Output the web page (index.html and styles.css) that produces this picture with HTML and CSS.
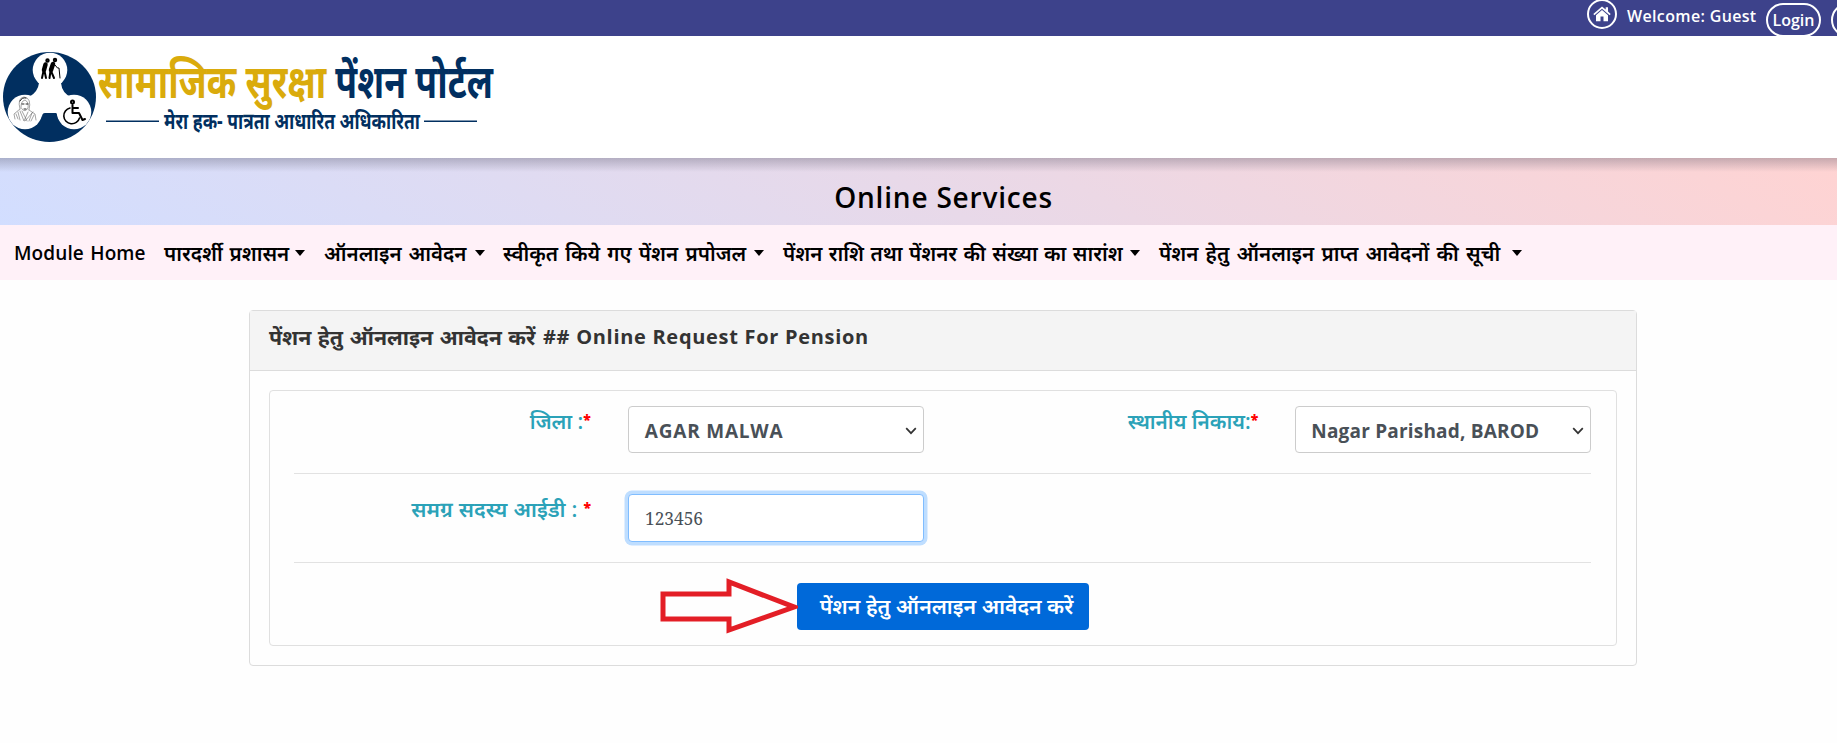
FILE: index.html
```html
<!DOCTYPE html>
<html lang="hi">
<head>
<meta charset="utf-8">
<title>Online Services</title>
<link rel="stylesheet" href="styles.css">
</head>
<body>
<header class="topbar">
  <a class="home"><svg width="18" height="16" viewBox="0 0 18 16"><path d="M9 0.5 0.3 8l1.1 1.2L9 2.8l7.6 6.4L17.7 8 15 5.6V1.2h-2.3v2.4z"/><path d="M9 4 3 9.2V15.2h4.5v-4.6h3v4.6H15V9.2z"/></svg></a>
  <span class="welcome">Welcome: Guest</span>
  <a class="pill">Login</a>
  <a class="pill pill-next"></a>
</header>
<div class="brand">
  <svg width="700" height="122" viewBox="0 36 700 122">
    <ellipse cx="49.5" cy="97" rx="46.5" ry="45" fill="#012f60"/>
    <g fill="#fff">
      <circle cx="50" cy="70" r="17.3"/><circle cx="25" cy="112" r="17.3"/><circle cx="74" cy="112" r="17.3"/>
      <path d="M39 83Q38 92 29 97L42 117Q42 113 45 113H56Q57 113 58 117L71 97Q62 93 61 83z"/>
    </g>
    <g fill="none" stroke="#000" stroke-linecap="round" stroke-linejoin="round">
      <circle cx="47.500" cy="60.500" r="1.200" stroke-width="2"/><circle cx="55" cy="60" r="1.200" stroke-width="2"/>
      <path d="M45.500 64.500 44 70M53 64 51 70" stroke-width="4.500"/>
      <path d="M43.500 71 42 78M44.500 71 46 78M50.500 71 49.500 78M51 71 54 78" stroke-width="2"/>
      <path d="M55 65 57.500 68H59L60 78" stroke-width="1"/>
      <circle cx="72.500" cy="102" r="1.500" stroke-width="2"/>
      <path d="M72.500 105V113H79L82.500 120 85 119M72.500 108H78" stroke-width="2"/>
      <path d="M70 108A8 8 0 1 0 79.500 118" stroke-width="1.600"/>
      <g stroke="#666" stroke-width=".6">
        <path d="M20 109Q17 98 24 97Q32 98 29 110M21 107Q21 101 25 100Q29 102 28 108Q25 113 22 109z"/>
        <path d="M22 104H24M26 104H28M24 109H26M20 101Q22 97 26 98" stroke="#111" stroke-width=".9"/>
        <path d="M20 109 14 114 15 119M29 110 35 114 36 120M20 111 24 121 28 112M22 111 27 121M18 112 20 120M32 113 29 121M16 114 18 119M34 115 31 121M25 121 33 112"/>
      </g>
    </g>
    <text x="98" y="97.500" textLength="395" lengthAdjust="spacingAndGlyphs" fill="#012f60" class="logo-text"><tspan fill="#daab0c">सामाजिक सुरक्षा</tspan> पेंशन पोर्टल</text>
    <text x="164" y="129" textLength="256" lengthAdjust="spacingAndGlyphs" fill="#012f60" class="logo-sub">मेरा हक- पात्रता आधारित अधिकारिता</text>
    <path d="M106 121.300H159M424 121.300H477" stroke="#012f60" stroke-width="1.600"/>
  </svg>
</div>
<div class="banner"><h1>Online Services</h1></div>
<nav class="menu">
  <a class="m1">Module Home</a>
  <a class="m2 drop">पारदर्शी प्रशासन</a>
  <a class="m3 drop">ऑनलाइन आवेदन</a>
  <a class="m4 drop">स्वीकृत किये गए पेंशन प्रपोजल</a>
  <a class="m5 drop">पेंशन राशि तथा पेंशनर की संख्या का सारांश</a>
  <a class="m6 drop">पेंशन हेतु ऑनलाइन प्राप्त आवेदनों की सूची</a>
</nav>
<main class="card">
  <h2><span class="h2-hi">पेंशन हेतु ऑनलाइन आवेदन करें</span><span class="h2-en">## Online Request For Pension</span></h2>
  <form class="panel">
    <div class="row">
      <label>जिला :<i>*</i></label>
      <div class="field select"><span class="v1">AGAR MALWA</span><svg width="12" height="8" viewBox="0 0 12 8"><path d="M1.200 1.200 6 6.200 10.800 1.200"/></svg></div>
      <label>स्थानीय निकाय:<i>*</i></label>
      <div class="field select"><span class="v2">Nagar Parishad, BAROD</span><svg width="12" height="8" viewBox="0 0 12 8"><path d="M1.200 1.200 6 6.200 10.800 1.200"/></svg></div>
    </div>
    <div class="row row-id">
      <label class="label-id">समग्र सदस्य आईडी :<i class="gap">*</i></label>
      <div class="field focus">123456</div>
    </div>
    <div class="actions">
      <svg class="arrow" width="140" height="58" viewBox="0 0 140 58"><path d="M5 18H71V6L136 31 71 54V43H5z"/></svg>
      <button type="button">पेंशन हेतु ऑनलाइन आवेदन करें</button>
    </div>
  </form>
</main>
</body>
</html>
```
FILE: styles.css
```css
* { box-sizing: border-box; }
body { margin: 0; width: 1837px; height: 743px; overflow: hidden; background: #fefefe; color: #000; font-family: "Open Sans", "Noto Sans Devanagari", "Noto Sans", sans-serif; font-weight: 600; white-space: nowrap; }
.topbar { height: 36px; background: #3d428b; color: #fff; display: flex; align-items: flex-start; padding-left: 1587px; overflow: hidden; }
.home { width: 30px; height: 30px; margin-top: -1px; border: 2px solid #fff; border-radius: 50%; flex: none; display: flex; align-items: center; justify-content: center; }
.home svg { fill: #fff; }
.welcome { width: 149px; flex: none; padding-left: 10px; font-size: 16px; line-height: 32px; letter-spacing: .35px; }
.pill { width: 55px; height: 34px; flex: none; margin-top: 3px; border: 2px solid #fff; border-radius: 17px; text-align: center; font-size: 16px; line-height: 30px; }
.pill-next { margin-left: 10px; }
.brand { height: 122px; background: #fff; }
.brand svg { display: block; }
.logo-text { font-size: 46px; font-weight: 700; }
.logo-sub { font-size: 23px; font-weight: 700; }
.banner { height: 67px; padding-left: 50px; text-align: center; background: linear-gradient(rgba(70,70,90,.3), rgba(90,90,110,0) 14px), linear-gradient(30deg, #d2deff, #e8d9e9 50%, #ffd3d2); }
.banner h1 { margin: 0; font-size: 28px; line-height: 78px; font-weight: 600; letter-spacing: .8px; }
.menu { height: 55px; padding-left: 14px; background: #fff1f8; display: flex; line-height: 56px; font-size: 20.5px; word-spacing: 1.4px; }
.menu a { flex: none; display: flex; align-items: center; }
.drop::after { content: ""; margin-left: auto; border: 5.5px solid transparent; border-top: 6px solid #000; border-bottom: 0; }
.m1 { width: 131px; margin-right: 19px; font-size: 19px; letter-spacing: .1px; }
.m2 { width: 141px; margin-right: 19px; }
.m3 { width: 161px; margin-right: 18px; }
.m4 { width: 261px; margin-right: 19px; }
.m5 { width: 357px; margin-right: 19px; word-spacing: 1.1px; }
.m4, .m6 { word-spacing: 1.9px; }
.m6 { width: 363px; }
.card { width: 1388px; height: 356px; margin: 30px 0 0 249px; border: 1px solid #dcdcdc; border-radius: 4px; }
h2 { margin: 0; height: 60px; padding-left: 19px; line-height: 52px; font-size: 20px; color: #333; background: #f4f4f4; border-bottom: 1px solid #dcdcdc; display: flex; }
.h2-hi { width: 274px; font-size: 21.3px; word-spacing: .9px; }
.h2-en { letter-spacing: .7px; }
.panel { height: 256px; margin: 19px 19px 0; border: 1px solid #e0e0e0; border-radius: 4px; padding: 15px 25px 0 24px; font-size: 20.7px; }
.row { height: 68px; border-bottom: 1px solid #e2e2e2; display: flex; }
.row-id { height: 89px; padding-top: 20px; }
label { color: #2ba2b8; width: 297px; padding-top: 1px; line-height: 28px; text-align: right; }
.row .field { margin-left: 37px; }
.field + label { width: 335px; }
.label-id { font-size: 21.3px; word-spacing: .5px; }
label i { color: #f00; font-style: normal; font-size: 14px; vertical-align: 4px; line-height: 1; font-weight: 800; }
.gap { margin-left: 6px; }
.field { width: 296px; height: 47px; padding: 2px 6px 0 16px; border: 1px solid #ccc; border-radius: 4px; color: #495057; background: #fff; display: flex; justify-content: space-between; align-items: center; font-size: 19px; }
.field svg { fill: none; stroke: #333; stroke-width: 1.7; }
.v1 { letter-spacing: .8px; font-weight: 700; }
.v2 { letter-spacing: .2px; font-weight: 700; margin-left: -1px; }
.row .focus { height: 48px; padding-top: 0; border-color: #80bdff; box-shadow: 0 0 0 3.5px #bfdeff; font: 17.3px "Noto Serif", "DejaVu Serif Condensed", "DejaVu Serif", serif; }
.actions { position: relative; display: flex; justify-content: center; padding-top: 20px; }
.arrow { position: absolute; left: 364px; top: 13px; fill: none; stroke: #e31e26; stroke-width: 5; }
button { width: 292px; height: 47px; border: 0; border-radius: 4px; padding: 0 0 0 8px; background: #0069d9; color: #fff; font: inherit; font-size: 21.2px; }
```
